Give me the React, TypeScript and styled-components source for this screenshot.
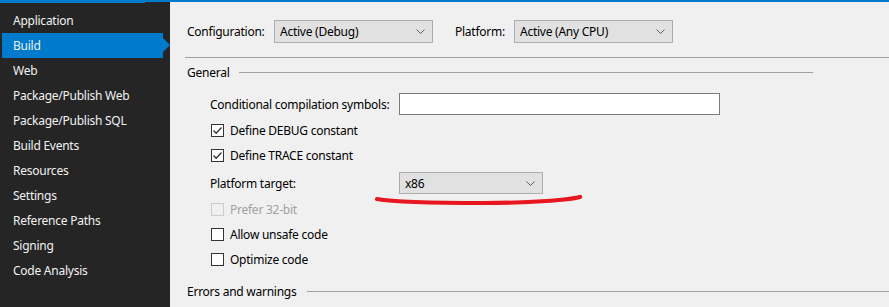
import styled, { createGlobalStyle } from 'styled-components';

const GlobalStyle = createGlobalStyle`
  html, body {
    margin: 0;
    padding: 0;
    background: #f0f0f0;
  }
  body {
    font-family: "Noto Sans", "Open Sans", sans-serif;
    font-size: 12px;
    letter-spacing: -0.25px;
  }
`;

const navItems = [
  'Application',
  'Build',
  'Web',
  'Package/Publish Web',
  'Package/Publish SQL',
  'Build Events',
  'Resources',
  'Settings',
  'Reference Paths',
  'Signing',
  'Code Analysis',
];

function Chevron() {
  return (
    <svg width="9" height="5" viewBox="0 0 9 5">
      <path d="M0.5 0.5 L4.5 4.5 L8.5 0.5" fill="none" stroke="#606060" strokeWidth="1" />
    </svg>
  );
}

function CheckMark() {
  return (
    <svg width="11" height="11" viewBox="0 0 11 11">
      <path d="M1.5 5.5 L4.2 8.2 L9.5 2.5" fill="none" stroke="#333" strokeWidth="1.3" />
    </svg>
  );
}

function Select({ value, width, height }: { value: string; width: number; height: number }) {
  return (
    <SelectBox $width={width} $height={height}>
      <span>{value}</span>
      <Chevron />
    </SelectBox>
  );
}

function Check({ label, checked, disabled }: { label: string; checked?: boolean; disabled?: boolean }) {
  return (
    <CheckRow $disabled={disabled}>
      <Box $disabled={disabled}>{checked && <CheckMark />}</Box>
      <span>{label}</span>
    </CheckRow>
  );
}

export default function App() {
  return (
    <>
      <GlobalStyle />
      <Page>
        <Sidebar>
          <Accent />
          <NavList>
            {navItems.map((item) => (
              <NavItem key={item} $active={item === 'Build'}>
                {item}
              </NavItem>
            ))}
          </NavList>
        </Sidebar>
        <Content>
          <HeaderRow>
            <HeaderLabel $width={76}>Configuration:</HeaderLabel>
            <Select value="Active (Debug)" width={159} height={23} />
            <PlatformLabel $width={48}>Platform:</PlatformLabel>
            <Select value="Active (Any CPU)" width={159} height={23} />
          </HeaderRow>
          <Separator />
          <GroupHeader $inset={76}>
            <span>General</span>
            <GroupLine />
          </GroupHeader>
          <FieldRow $top={11}>
            <FieldLabel>Conditional compilation symbols:</FieldLabel>
            <TextBox />
          </FieldRow>
          <Options $top={3}>
            <Check label="Define DEBUG constant" checked />
            <Check label="Define TRACE constant" checked />
          </Options>
          <FieldRow $top={4}>
            <FieldLabel>Platform target:</FieldLabel>
            <Select value="x86" width={144} height={22} />
            <Scribble width="210" height="12" viewBox="0 0 210 12">
              <path
                d="M3 5 C 20 8, 60 9, 110 9 C 150 9, 175 7, 190 5.5 C 198 4.6, 203 4, 206 3"
                fill="none"
                stroke="#e8161f"
                strokeWidth="4.2"
                strokeLinecap="round"
              />
            </Scribble>
          </FieldRow>
          <Options $top={3}>
            <Check label="Prefer 32-bit" disabled />
            <Check label="Allow unsafe code" />
            <Check label="Optimize code" />
          </Options>
          <GroupHeader $inset={0} $top={9}>
            <span>Errors and warnings</span>
            <GroupLine />
          </GroupHeader>
        </Content>
      </Page>
    </>
  );
}

const Page = styled.div`
  display: flex;
  height: 307px;
  overflow: hidden;
  border-top: 2px solid #007acc;
`;

const Sidebar = styled.nav`
  position: relative;
  width: 170px;
  flex-shrink: 0;
  background: #252526;
`;

const Accent = styled.div`
  position: absolute;
  top: 0;
  left: 0;
  width: 145px;
  height: 1px;
  background: #007acc;
`;

const NavList = styled.ul`
  list-style: none;
  margin: 0;
  padding: 6px 0 0 0;
`;

const NavItem = styled.li<{ $active?: boolean }>`
  position: relative;
  height: 25px;
  line-height: 25px;
  margin-left: 2px;
  width: 161px;
  padding-left: 11px;
  box-sizing: border-box;
  color: #f1f1f1;
  background: ${(p) => (p.$active ? '#007acc' : 'transparent')};

  ${(p) =>
    p.$active &&
    `
    &::after {
      content: '';
      position: absolute;
      right: -7px;
      top: 5px;
      border-left: 7px solid #007acc;
      border-top: 7px solid transparent;
      border-bottom: 7px solid transparent;
    }
  `}
`;

const Content = styled.main`
  flex: 1;
  padding-left: 15px;
  color: #000;
`;

const HeaderRow = styled.div`
  display: flex;
  align-items: center;
  gap: 11px;
  margin-top: 18px;
  padding-left: 2px;
`;

const HeaderLabel = styled.span<{ $width: number }>`
  width: ${(p) => p.$width}px;
  white-space: nowrap;
`;

const PlatformLabel = styled(HeaderLabel)`
  margin-left: 11px;
`;

const SelectBox = styled.div<{ $width: number; $height: number }>`
  display: flex;
  align-items: center;
  justify-content: space-between;
  width: ${(p) => p.$width}px;
  height: ${(p) => p.$height}px;
  box-sizing: border-box;
  padding: 0 7px 0 5px;
  background: #e1e1e1;
  border: 1px solid #adadad;
`;

const Separator = styled.div`
  height: 1px;
  background: #a0a0a0;
  margin-top: 14px;
`;

const GroupHeader = styled.div<{ $inset: number; $top?: number }>`
  display: flex;
  align-items: center;
  gap: 10px;
  height: 20px;
  margin-top: ${(p) => p.$top ?? 4}px;
  padding-left: 2px;
  margin-right: ${(p) => p.$inset}px;
`;

const GroupLine = styled.div`
  flex: 1;
  height: 1px;
  background: #a0a0a0;
`;

const FieldRow = styled.div<{ $top: number }>`
  position: relative;
  display: flex;
  align-items: center;
  height: 22px;
  margin-top: ${(p) => p.$top}px;
  padding-left: 25px;
`;

const FieldLabel = styled.span`
  width: 189px;
  white-space: nowrap;
`;

const TextBox = styled.div`
  width: 321px;
  height: 22px;
  box-sizing: border-box;
  background: #fff;
  border: 1px solid #7a7a7a;
`;

const Scribble = styled.svg`
  position: absolute;
  left: 189px;
  top: 22px;
`;

const Options = styled.div<{ $top: number }>`
  display: flex;
  flex-direction: column;
  margin-top: ${(p) => p.$top}px;
  padding-left: 26px;
`;

const CheckRow = styled.label<{ $disabled?: boolean }>`
  display: flex;
  align-items: center;
  gap: 6px;
  height: 25px;
  color: ${(p) => (p.$disabled ? '#a0a0a0' : '#000')};
`;

const Box = styled.span<{ $disabled?: boolean }>`
  display: flex;
  align-items: center;
  justify-content: center;
  width: 13px;
  height: 13px;
  box-sizing: border-box;
  background: ${(p) => (p.$disabled ? '#f0f0f0' : '#fff')};
  border: 1px solid ${(p) => (p.$disabled ? '#cccccc' : '#333333')};
`;
